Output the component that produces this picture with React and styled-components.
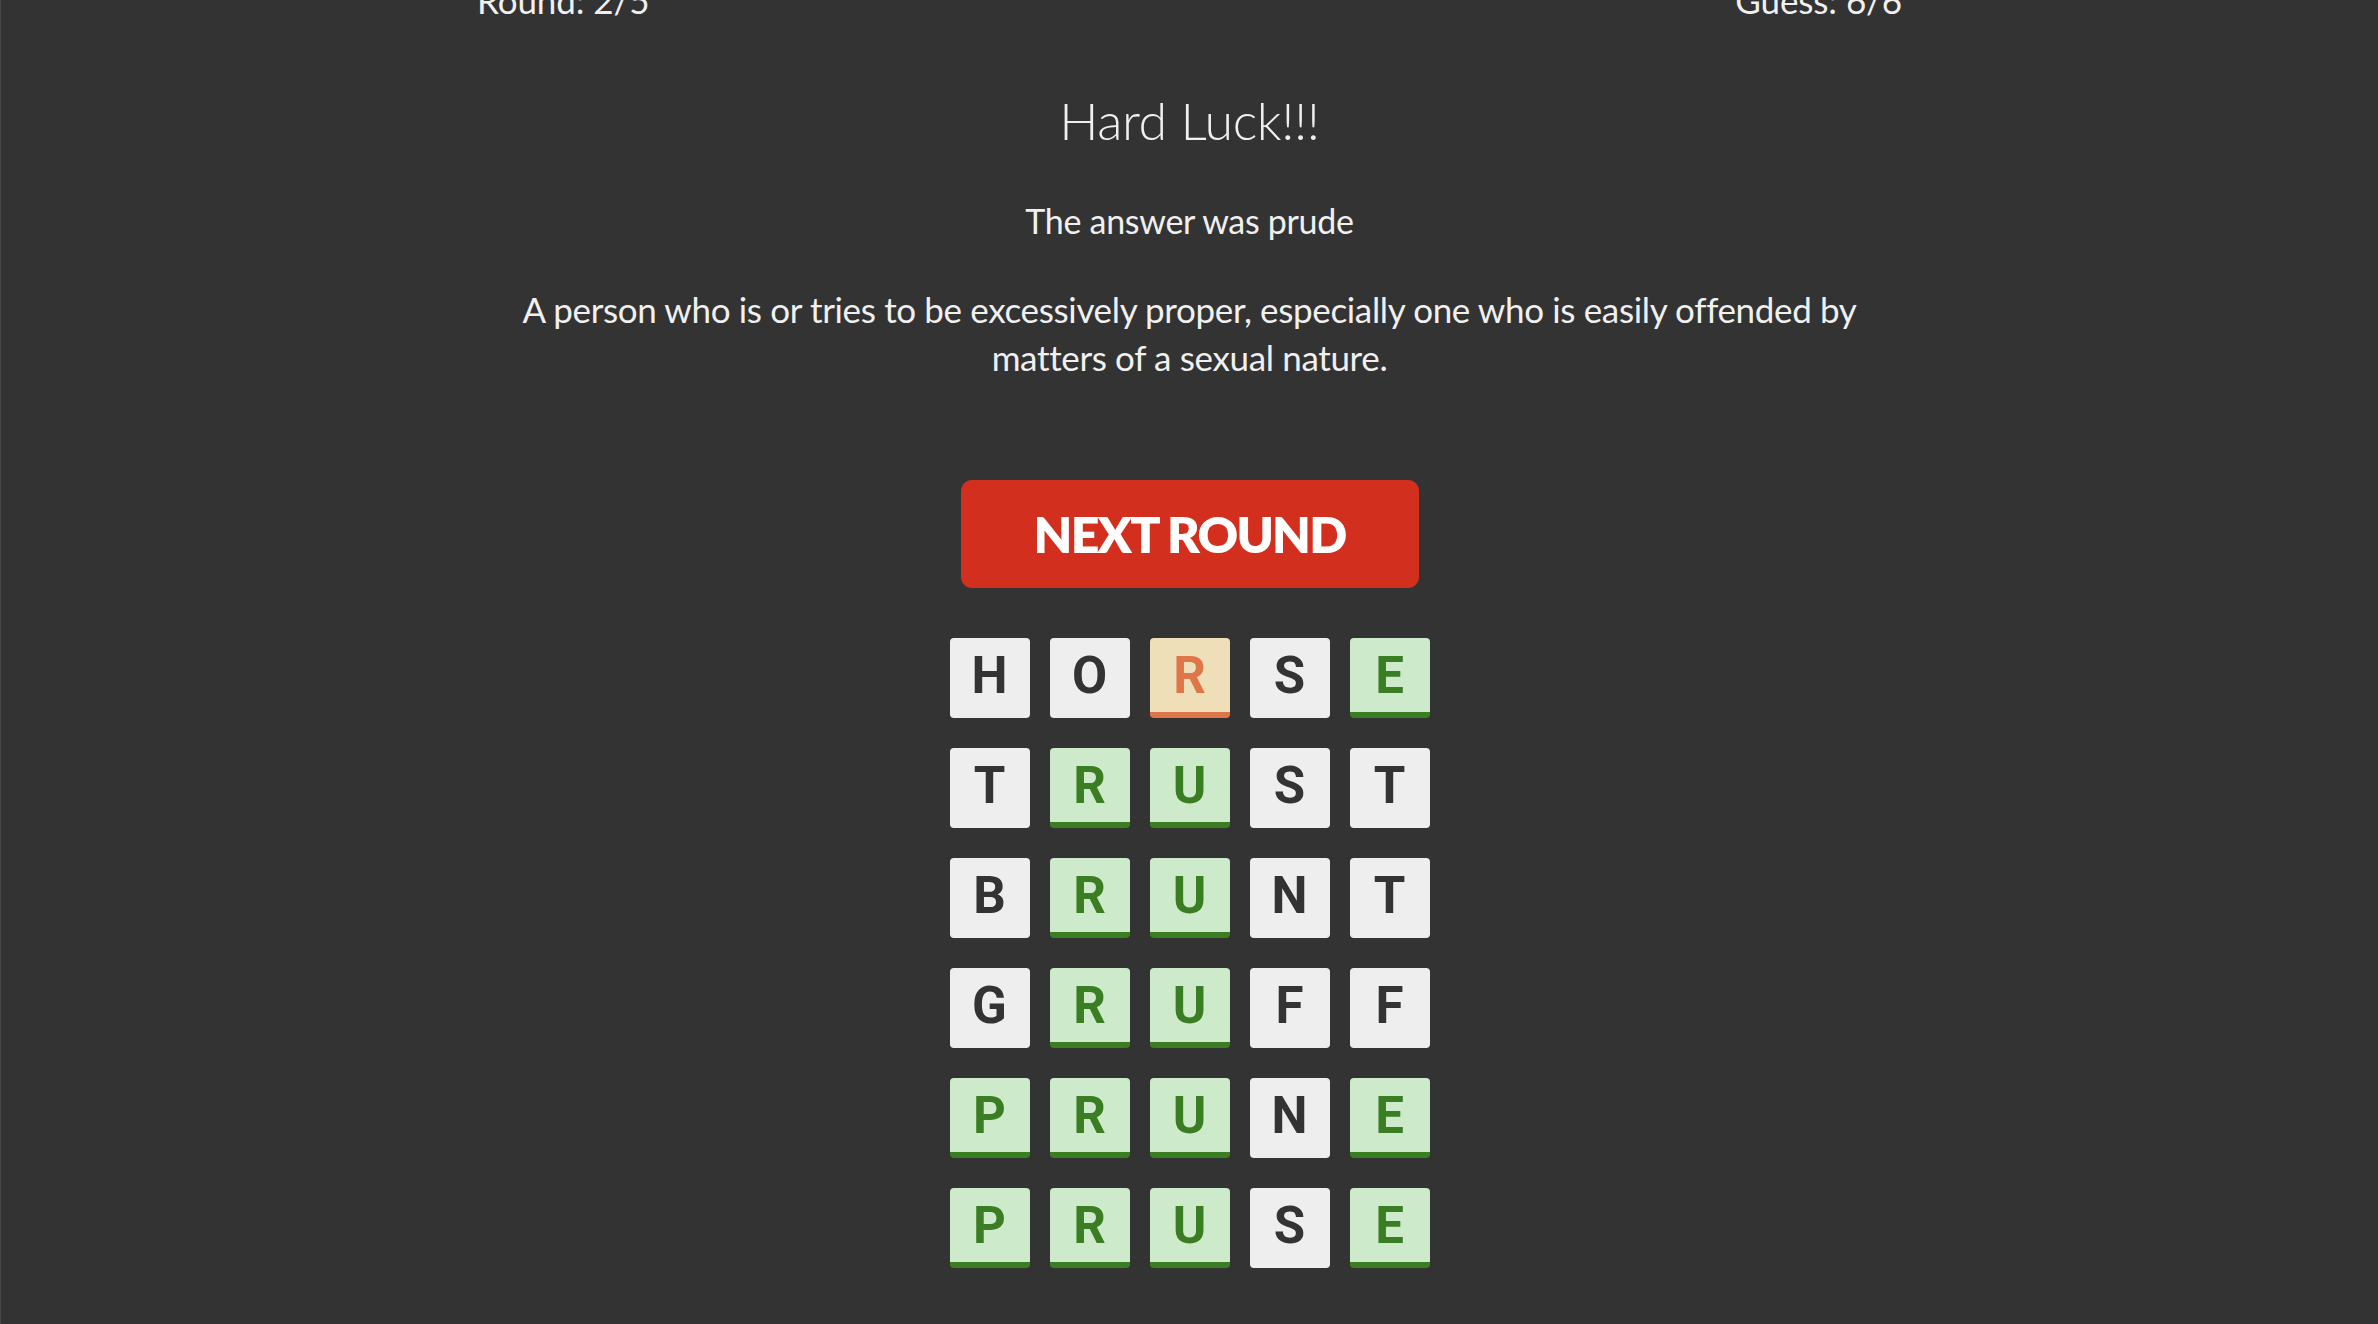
import React from "react";
import styled, { createGlobalStyle } from "styled-components";

const Global = createGlobalStyle`
  html, body { margin: 0; padding: 0; background: #333333; }
  body { font-family: "Lato", "Inter", sans-serif; color: #f0f0f0; overflow: hidden; }
`;

const Page = styled.div`
  min-height: 1324px;
  box-sizing: border-box;
  border-left: 1px solid #474747;
  display: flex;
  flex-direction: column;
  align-items: center;
`;

const Header = styled.div`
  width: 1425px;
  display: flex;
  justify-content: space-between;
  margin-top: -20px;
  font-size: 35px;
  line-height: 40px;
  font-weight: 400;
  letter-spacing: -0.1px;
`;

const Title = styled.h1`
  margin: 69px 0 0;
  font-size: 52px;
  line-height: 62px;
  font-weight: 300;
  letter-spacing: -0.4px;
`;

const Answer = styled.p`
  margin: 48px 0 0;
  font-size: 34px;
  line-height: 44px;
  font-weight: 400;
  letter-spacing: -0.3px;
`;

const Definition = styled.p`
  margin: 42px 0 0;
  max-width: 1370px;
  text-align: center;
  font-size: 35px;
  line-height: 48px;
  font-weight: 400;
  letter-spacing: -0.35px;
`;

const NextButton = styled.button`
  margin-top: 99px;
  width: 458px;
  height: 108px;
  padding: 0;
  border: none;
  border-radius: 11px;
  background: #d32f1f;
  color: #ffffff;
  font-family: "Lato", sans-serif;
  font-weight: 800;
  font-size: 50px;
  letter-spacing: -1.8px;
  cursor: pointer;
`;

const Board = styled.div`
  margin-top: 50px;
  display: grid;
  grid-template-columns: repeat(5, 80px);
  column-gap: 20px;
  row-gap: 30px;
`;

const palette = {
  none: { bg: "#eeeeee", fg: "#333333", bar: "#eeeeee" },
  hit: { bg: "#cdeacb", fg: "#3a7d22", bar: "#3a7d22" },
  near: { bg: "#efdfb9", fg: "#df764a", bar: "#df764a" },
};

const Tile = styled.div`
  width: 80px;
  height: 80px;
  box-sizing: border-box;
  border-radius: 4px;
  background: ${(p) => palette[p.$state].bg};
  color: ${(p) => palette[p.$state].fg};
  border-bottom: 6px solid ${(p) => palette[p.$state].bar};
  display: flex;
  align-items: center;
  justify-content: center;
  font-family: "Roboto", sans-serif;
  font-weight: 700;
  font-size: 51px;
  line-height: 1;
`;

const rows = [
  ["HORSE", "--n-h"],
  ["TRUST", "-hh--"],
  ["BRUNT", "-hh--"],
  ["GRUFF", "-hh--"],
  ["PRUNE", "hhh-h"],
  ["PRUSE", "hhh-h"],
];

const stateOf = (c) => (c === "h" ? "hit" : c === "n" ? "near" : "none");

export default function App() {
  return (
    <>
      <Global />
      <Page>
        <Header>
          <span>Round: 2/5</span>
          <span>Guess: 6/6</span>
        </Header>
        <Title>Hard Luck!!!</Title>
        <Answer>The answer was prude</Answer>
        <Definition>
          A person who is or tries to be excessively proper, especially one who is easily offended by
          matters of a sexual nature.
        </Definition>
        <NextButton>NEXT ROUND</NextButton>
        <Board>
          {rows.map(([word, st], r) =>
            word.split("").map((ch, i) => (
              <Tile key={`${r}-${i}`} $state={stateOf(st[i])}>
                {ch}
              </Tile>
            ))
          )}
        </Board>
      </Page>
    </>
  );
}
